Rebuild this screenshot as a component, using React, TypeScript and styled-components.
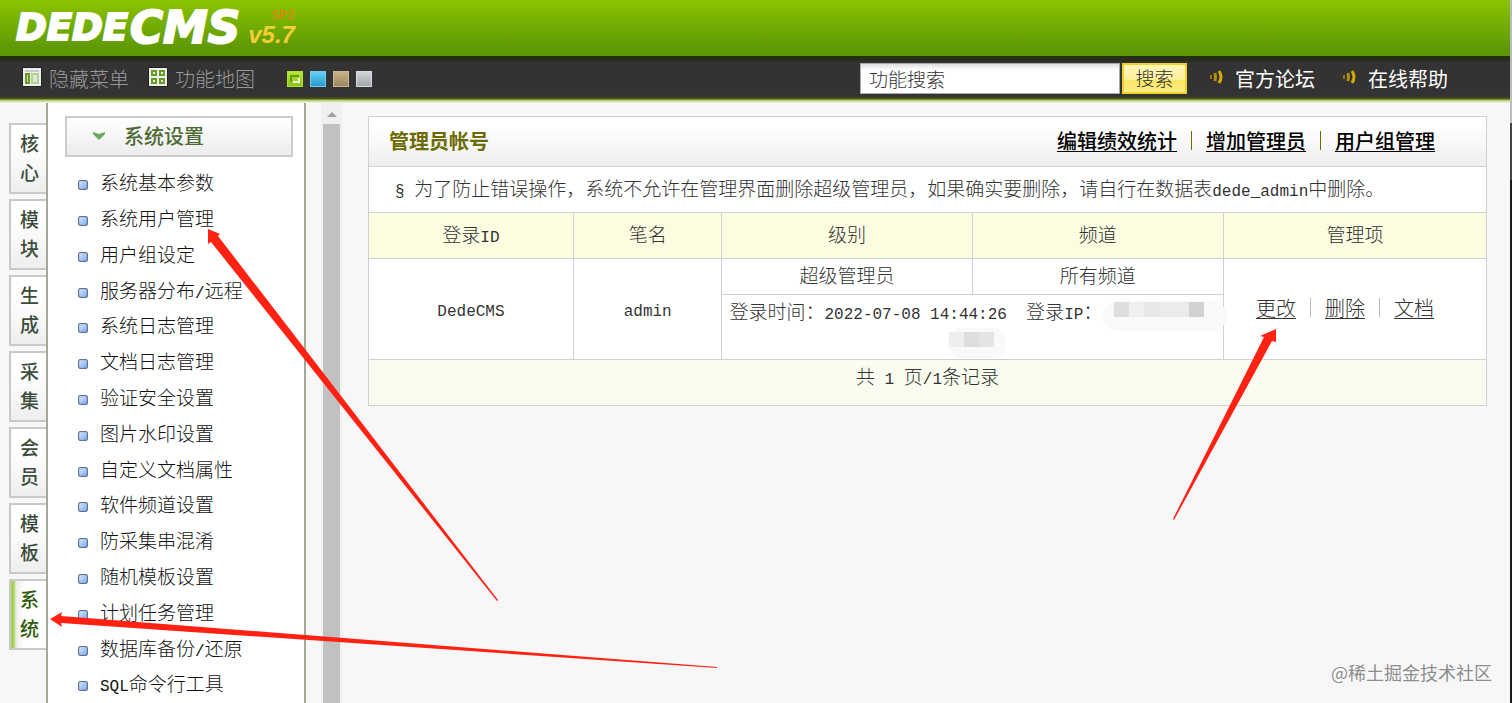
import React from "react";
import styled, { createGlobalStyle, css } from "styled-components";

const Global = createGlobalStyle`
  * { box-sizing: border-box; }
  html, body { margin: 0; background: #f7f7f7; }
  body { color: #333; font: 300 19px/24px "Noto Sans CJK SC", sans-serif; overflow: hidden; }
  a { color: inherit; text-decoration: none; }
  button, input { font: inherit; color: inherit; margin: 0; border-radius: 0; }
  ul { list-style: none; margin: 0; padding: 0; }
`;

const Page = styled.div`
  position: relative;
  display: flex;
  flex-direction: column;
  height: 100vh;
  overflow: hidden;
`;

const Banner = styled.header`
  display: flex;
  flex: none;
  gap: 2px;
  height: 56px;
  padding: 7px 0 0 16px;
  background: linear-gradient(#8cc300, #5f9a06 85%, #5c9604);
`;

const LogoText = styled.span<{ $size: number }>`
  color: #fff;
  font: italic 700 ${(p) => p.$size}px/42px "DejaVu Sans", sans-serif;
  -webkit-text-stroke: 2px #fff;
`;

const Version = styled.div`
  display: flex;
  flex-direction: column;
  margin-left: 6px;
  padding-top: 1px;
  color: #f4cd34;
  font: italic 700 24px/26px "Liberation Sans", sans-serif;
`;

const ServicePack = styled.small`
  align-self: flex-end;
  color: #f47a10;
  font: 400 13px/14px "DejaVu Sans Mono", monospace;
`;

const Toolbar = styled.nav`
  display: flex;
  flex: none;
  align-items: center;
  height: 47px;
  padding: 0 59px 3px 22px;
  background: linear-gradient(#1e3208, #2b2c21 3px, #2b2c21 5px, #333 6px, #333 39px, #343c20 41px, #4c5f1b 43px, #a7c36c 44px, #dcebb5 46px, #f7f7f7);
`;

const ToolLink = styled.a<{ $bright?: boolean }>`
  display: flex;
  align-items: center;
  gap: ${(p) => (p.$bright ? 8 : 7)}px;
  margin: ${(p) => (p.$bright ? "0 5px 0 22px" : "0 19px 0 0")};
  padding-top: 2px;
  color: ${(p) => (p.$bright ? "#fff" : "#999")};
  font-size: 20px;
  font-weight: ${(p) => (p.$bright ? 400 : 300)};
  svg { margin-bottom: 4px; }
`;

const Swatches = styled.div`
  display: flex;
  gap: 7px;
  margin: 2px 0 0 13px;
`;

const Swatch = styled.button<{ $edge: string; $from: string; $to: string }>`
  width: 16px;
  height: 16px;
  padding: 0;
  border: 1px solid ${(p) => p.$edge};
  background: linear-gradient(${(p) => p.$from}, ${(p) => p.$to});
`;

const Search = styled.form`
  display: flex;
  gap: 2px;
  margin-left: auto;
`;

const SearchInput = styled.input`
  width: 260px;
  height: 31px;
  padding: 0 8px;
  border: 1px solid #aaa;
  background: linear-gradient(#ddd, #fff 6px);
  &::placeholder { color: #333; opacity: 1; }
`;

const SearchButton = styled.button`
  width: 65px;
  height: 31px;
  padding: 0;
  border: 2px solid #efd12c;
  background: linear-gradient(#fff6b8, #fdf0a0 50%, #fde765 60%, #fdec86);
`;

const Body = styled.div`
  display: flex;
  flex: 1;
  min-height: 0;
`;

const Tabs = styled.nav`
  display: flex;
  flex: none;
  flex-direction: column;
  gap: 5px;
  width: 46px;
  padding: 20px 0 0 9px;
`;

const Tab = styled.a<{ $active?: boolean }>`
  display: flex;
  flex-direction: column;
  align-items: center;
  justify-content: center;
  height: 71px;
  padding: 0 0 4px 2px;
  border: 2px solid #c9c9c9;
  border-right: 0;
  background: linear-gradient(#fff 30%, #eee);
  color: #3d4d3d;
  font-weight: 500;
  line-height: 29px;
  ${(p) =>
    p.$active &&
    css`
      background: linear-gradient(90deg, #a5d05a 3px, #d3e8ae 4px, #f0f0f0 6px, #fff 14px);
      color: #2e5a08;
    `}
`;

const Menu = styled.aside`
  flex: none;
  width: 260px;
  padding: 13px 11px 0 17px;
  border: solid #a5a799;
  border-width: 0 2px;
  background: #fff;
`;

const MenuTitle = styled.button`
  display: flex;
  align-items: center;
  gap: 18px;
  width: 100%;
  height: 41px;
  padding: 0 0 2px 25px;
  border: 2px solid #ccc;
  background: linear-gradient(#fff, #ececec);
  color: #4c6b33;
  font-size: 20px;
  font-weight: 500;
`;

const MenuList = styled.ul`
  padding: 7px 0 0 13px;
`;

const MenuItem = styled.li<{ $tight?: boolean }>`
  display: flex;
  align-items: center;
  gap: 12px;
  height: ${(p) => (p.$tight ? 35 : 36)}px;
  white-space: nowrap;
  color: #111;
`;

const Bullet = styled.i`
  width: 10px;
  height: 10px;
  margin-top: 6px;
  border: 1px solid #66728a;
  border-radius: 2px;
  background: linear-gradient(135deg, #d6e8ff, #79a9f5);
  box-shadow: inset 0 0 1px #4d5870;
`;

const ScrollTrack = styled.div`
  display: flex;
  flex: none;
  flex-direction: column;
  align-items: center;
  width: 21px;
  margin-left: 15px;
  background: #f0f0f0;
`;

const ScrollArrow = styled.svg`
  flex: none;
  width: 10px;
  height: 21px;
`;

const ScrollThumb = styled.div`
  flex: 1;
  width: 17px;
  background: #c1c1c1;
`;

const Main = styled.main`
  flex: 1;
  min-width: 0;
  padding: 13px 25px 0 26px;
`;

const Panel = styled.section`
  border: 1px solid #d1d1d1;
  background: #fff;
`;

const PanelHead = styled.header`
  display: flex;
  align-items: center;
  justify-content: space-between;
  height: 49px;
  padding: 0 51px 2px 20px;
  background: linear-gradient(#fff 20%, #eee);
`;

const Title = styled.h1`
  margin: 0;
  color: #6b6b00;
  font-size: 20px;
  font-weight: 700;
  line-height: 24px;
`;

const Links = styled.div<{ $strong?: boolean }>`
  display: flex;
  align-items: center;
  justify-content: center;
  gap: 14px;
  padding-right: ${(p) => (p.$strong ? 0 : 20)}px;
  color: ${(p) => (p.$strong ? "#000" : "#333")};
  font-size: 20px;
  font-weight: ${(p) => (p.$strong ? 500 : 300)};
  a { text-decoration: underline 1px; text-underline-offset: 2px; }
`;

const Divider = styled.i<{ $strong?: boolean }>`
  width: 1px;
  height: 19px;
  background: ${(p) => (p.$strong ? "#6b6b00" : "#bbb")};
`;

const Note = styled.p`
  margin: 0;
  padding: 9px 0 12px 26px;
  border-top: 1px solid #d1d1d1;
  white-space: nowrap;
`;

const Latin = styled.span`
  font-family: "Liberation Mono", monospace;
  font-size: 16px;
  font-weight: 400;
  line-height: 16px;
  white-space: pre;
`;

const Accounts = styled.table`
  width: 100%;
  border-collapse: collapse;
  table-layout: fixed;
  text-align: center;
  th, td { padding: 0 0 3px; border: 1px solid #d1d1d1; font-weight: 300; }
  th { height: 46px; background: #fcfce1; }
  tr > :first-child:not([data-inner]) { border-left: 0; }
  tr > :last-child:not([data-inner]) { border-right: 0; }
  tfoot td { height: 45px; padding-bottom: 12px; border-bottom: 0; background: #f9fcef; }
`;

const ShortCell = styled.td`
  height: 36px;
`;

const LoginCell = styled.td`
  height: 65px;
  vertical-align: top;
`;

const LoginLine = styled.div`
  position: relative;
  display: flex;
  padding: 4px 0 0 7px;
  white-space: nowrap;
`;

const Redaction = styled.svg<{ $second?: boolean }>`
  position: absolute;
  top: ${(p) => (p.$second ? 33 : 6)}px;
  left: ${(p) => (p.$second ? 226 : 381)}px;
`;

const Overlay = styled.svg`
  position: absolute;
  top: 0;
  left: 0;
  pointer-events: none;
`;

const Watermark = styled.span`
  position: absolute;
  right: 20px;
  bottom: 19px;
  color: #8c8c8c;
  font-size: 18px;
  font-weight: 400;
  text-shadow: 0 0 2px #fff;
`;

const WindowEdge = styled.i`
  position: absolute;
  top: 0;
  right: 0;
  bottom: 0;
  width: 2px;
  background: linear-gradient(#bbb 123px, #444 123px, #444 180px, #1a1a1a 180px);
`;

const tabs = ["核心", "模块", "生成", "采集", "会员", "模板", "系统"];

const menu = [
  "系统基本参数", "系统用户管理", "用户组设定", "服务器分布/远程", "系统日志管理",
  "文档日志管理", "验证安全设置", "图片水印设置", "自定义文档属性", "软件频道设置",
  "防采集串混淆", "随机模板设置", "计划任务管理", "数据库备份/还原", "SQL命令行工具",
];

const swatches = [
  ["#b5e61d", "#b9e532", "#8cc41c"],
  ["#7cc8e8", "#5fd0f5", "#2a9bd0"],
  ["#cdb88d", "#c9b184", "#9c875f"],
  ["#d8dadd", "#d0d3d7", "#a4a8ad"],
];

/* Sets the Latin runs of a mixed string in the monospaced face. */
const Mixed = ({ text }: { text: string }) => (
  <span>
    {text.split(/([\x20-\x7e§]+)/).map((part, i) => (i % 2 ? <Latin key={i}>{part}</Latin> : part))}
  </span>
);

const PanesIcon = () => (
  <svg width="20" height="20" viewBox="0 0 20 20" aria-hidden="true">
    <path fill="#222" d="M0 0h20v20H0z" />
    <path fill="#eee" d="M1 1h18v18H1z" />
    <path fill="#ccc" d="M3 3h14v2H3z" />
    <path fill="#6a9b25" d="M3 6h5v11H3z" />
    <path fill="#c5dba8" d="M5 8h1v7H5z" />
    <path fill="#b4cf94" d="M9 6h8v11H9z" />
    <path fill="#dce8cf" d="M11 8h4v7h-4z" />
  </svg>
);

const GridIcon = () => (
  <svg width="20" height="20" viewBox="0 0 20 20" aria-hidden="true">
    <path fill="#222" d="M0 0h20v20H0z" />
    <path fill="#eee" d="M1 1h18v18H1z" />
    <path fill="none" stroke="#6a9b25" strokeWidth="2" d="M4 4h4v4H4zM12 4h4v4h-4zM4 12h4v4H4zM12 12h4v4h-4z" />
  </svg>
);

const SignalIcon = () => (
  <svg width="18" height="20" viewBox="0 0 18 20" fill="none" stroke="#d6a800" aria-hidden="true">
    <path strokeWidth="2" d="M2 8v4" opacity=".6" />
    <path strokeWidth="3" d="M6 6q1 4 0 8" opacity=".8" />
    <path strokeWidth="3" d="M10 4q4 6 0 12" />
  </svg>
);

export default function App() {
  return (
    <Page>
      <Global />
      <Banner>
        <LogoText $size={37}>DEDE</LogoText>
        <LogoText $size={45}>CMS</LogoText>
        <Version>
          <ServicePack>SP2</ServicePack>
          v5.7
        </Version>
      </Banner>
      <Toolbar>
        <ToolLink href="#menu"><PanesIcon />隐藏菜单</ToolLink>
        <ToolLink href="#map"><GridIcon />功能地图</ToolLink>
        <Swatches>
          {swatches.map(([edge, from, to], i) => (
            <Swatch key={edge} $edge={edge} $from={from} $to={to} aria-label={`配色 ${i + 1}`}>
              {i === 0 && (
                <svg width="14" height="14" viewBox="0 0 14 14" fill="none" strokeWidth="2" display="block">
                  <path stroke="#609c0a" d="M3 10V4h8" />
                  <path stroke="#f2ffd0" d="M5 10h6V6" />
                </svg>
              )}
            </Swatch>
          ))}
        </Swatches>
        <Search>
          <SearchInput aria-label="功能搜索" placeholder="功能搜索" />
          <SearchButton type="button">搜索</SearchButton>
        </Search>
        <ToolLink $bright href="#forum"><SignalIcon />官方论坛</ToolLink>
        <ToolLink $bright href="#help"><SignalIcon />在线帮助</ToolLink>
      </Toolbar>
      <Body>
        <Tabs>
          {tabs.map((name) => (
            <Tab key={name} href={`#${name}`} $active={name === "系统"}>
              <span>{name[0]}</span>
              <span>{name[1]}</span>
            </Tab>
          ))}
        </Tabs>
        <Menu>
          <MenuTitle>
            <svg width="14" height="8" viewBox="0 0 14 8" aria-hidden="true">
              <path fill="#68ad5c" d="M1 0l6 2 6-2v2L7 8 1 2z" />
            </svg>
            系统设置
          </MenuTitle>
          <MenuList>
            {menu.map((name, i) => (
              <MenuItem key={name} $tight={i % 5 === 3}>
                <Bullet />
                <a href={`#${i}`}><Mixed text={name} /></a>
              </MenuItem>
            ))}
          </MenuList>
        </Menu>
        <ScrollTrack>
          <ScrollArrow viewBox="0 0 10 21" aria-hidden="true"><path fill="#a0a0a0" d="M0 14l5-5 5 5z" /></ScrollArrow>
          <ScrollThumb />
        </ScrollTrack>
        <Main>
          <Panel>
            <PanelHead>
              <Title>管理员帐号</Title>
              <Links $strong>
                <a href="#stats">编辑绩效统计</a>
                <Divider $strong />
                <a href="#add">增加管理员</a>
                <Divider $strong />
                <a href="#groups">用户组管理</a>
              </Links>
            </PanelHead>
            <Note>
              <Mixed text="§ 为了防止错误操作，系统不允许在管理界面删除超级管理员，如果确实要删除，请自行在数据表dede_admin中删除。" />
            </Note>
            <Accounts>
              <colgroup>
                <col style={{ width: "18.3%" }} />
                <col style={{ width: "13.3%" }} />
                <col style={{ width: "22.4%" }} />
                <col style={{ width: "22.5%" }} />
                <col style={{ width: "23.5%" }} />
              </colgroup>
              <thead>
                <tr>
                  <th><Mixed text="登录ID" /></th>
                  <th>笔名</th>
                  <th>级别</th>
                  <th>频道</th>
                  <th>管理项</th>
                </tr>
              </thead>
              <tbody>
                <tr>
                  <td rowSpan={2}><Latin>DedeCMS</Latin></td>
                  <td rowSpan={2}><Latin>admin</Latin></td>
                  <ShortCell>超级管理员</ShortCell>
                  <ShortCell>所有频道</ShortCell>
                  <td rowSpan={2}>
                    <Links>
                      <a href="#edit">更改</a>
                      <Divider />
                      <a href="#delete">删除</a>
                      <Divider />
                      <a href="#docs">文档</a>
                    </Links>
                  </td>
                </tr>
                <tr>
                  <LoginCell colSpan={2} data-inner>
                    <LoginLine>
                      <Mixed text="登录时间：2022-07-08 14:44:26  登录IP：" />
                      <Redaction width="124" height="32" aria-hidden="true">
                        <rect width="124" height="30" rx="15" fill="#f9f9f9" />
                        <path fill="#dedede" d="M11 1h15v15H11z" />
                        <path fill="#f0f0f0" d="M26 1h15v15H26z" />
                        <path fill="#e8e8e8" d="M41 1h15v15H41z" />
                        <path fill="#ebebeb" d="M56 1h30v15H56z" />
                        <path fill="#d2d2d2" d="M86 1h15v15H86z" />
                      </Redaction>
                      <Redaction $second width="60" height="32" aria-hidden="true">
                        <rect width="58" height="30" rx="14" fill="#f9f9f9" />
                        <path fill="#eee" d="M1 4h15v15H1z" />
                        <path fill="#ddd" d="M16 4h15v15H16z" />
                        <path fill="#e4e4e4" d="M31 4h15v15H31z" />
                      </Redaction>
                    </LoginLine>
                  </LoginCell>
                </tr>
              </tbody>
              <tfoot>
                <tr><td colSpan={5}><Mixed text="共 1 页/1条记录" /></td></tr>
              </tfoot>
            </Accounts>
          </Panel>
        </Main>
      </Body>
      <Overlay width="1512" height="703" fill="#ff2213" aria-hidden="true">
        <path d="M208 229l12 5-2 2 280 364-1 1L211 242l-3 2z" />
        <path d="M50 619l12-7-1 4 656 51v1L61 623l1 4z" />
        <path d="M1276 329v13l-4-1-98 179-1-1 91-182-4-1z" />
      </Overlay>
      <Watermark>@稀土掘金技术社区</Watermark>
      <WindowEdge />
    </Page>
  );
}
